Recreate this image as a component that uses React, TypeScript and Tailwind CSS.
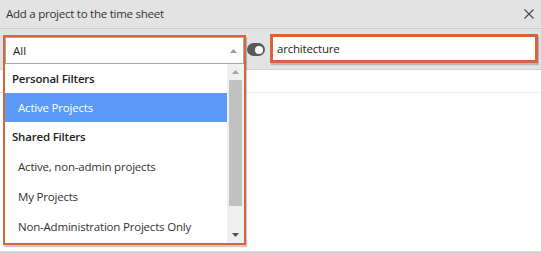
import React from "react";

export default function App() {
  const font = { fontFamily: '"Open Sans", "Noto Sans", Arial, sans-serif' };
  return (
    <div className="relative w-[541px] h-[253px] bg-white overflow-hidden" style={font}>
      {/* header */}
      <div className="h-[29px] bg-[#e3e3e3] border-b border-[#cdcdcd] flex items-center justify-between pl-[6px] pr-[6px]">
        <span className="text-[11.5px] text-[#333] tracking-[-0.25px]">Add a project to the time sheet</span>
        <svg width="10" height="10" viewBox="0 0 10 10" className="mr-[1px]">
          <path d="M0.5 0.5 L9.5 9.5 M9.5 0.5 L0.5 9.5" stroke="#3b4a5a" strokeWidth="1.1" />
        </svg>
      </div>
      {/* toolbar */}
      <div className="relative h-[41px] bg-[#e3e3e3] border-b border-[#d2d2d2] flex items-start pt-[5px] pl-[247px] pr-[3px]">
        <div className="mt-[9px] w-[18px] h-[13px] rounded-full bg-[#5a5a5a] flex items-center justify-end pr-[2px]">
          <div className="w-[8px] h-[8px] rounded-full bg-white" />
        </div>
        <div className="ml-[5px] flex-1 h-[29px] border-[3px] border-[#d9633d] bg-white shadow-[1px_2px_1px_rgba(0,0,0,0.2)] flex items-center pl-[4px]">
          <span className="text-[11.5px] text-[#222] tracking-[-0.2px]">architecture</span>
        </div>
      </div>
      {/* content line */}
      <div className="h-[23px] border-b border-[#ececec]" />
      {/* bottom strip */}
      <div className="absolute left-0 right-0 bottom-0 h-[2px] bg-[#d6d6d6]" />

      {/* dropdown */}
      <div className="absolute left-[3px] top-[35px] w-[243px] h-[210px] border-[2px] border-[#d9633d] bg-white shadow-[1px_2px_1px_rgba(0,0,0,0.2)] flex flex-col">
        <div className="h-[27px] border border-[#a8a8a8] flex items-center justify-between pl-[7px] pr-[6px]">
          <span className="text-[11.5px] text-[#222]">All</span>
          <svg width="7" height="4" viewBox="0 0 7 4"><path d="M0 4 L3.5 0 L7 4 Z" fill="#9a9a9a" /></svg>
        </div>
        <div className="flex flex-1 min-h-0">
          <div className="flex-1 flex flex-col text-[11.5px] text-[#333] tracking-[-0.2px]">
            <div className="h-[29px] shrink-0 flex items-center pl-[7px] font-semibold text-[#222]">Personal Filters</div>
            <div className="h-[29px] shrink-0 flex items-center pl-[13px] bg-[#5b9bf7] text-white">Active Projects</div>
            <div className="h-[30px] shrink-0 flex items-center pl-[7px] font-semibold text-[#222]">Shared Filters</div>
            <div className="h-[30px] shrink-0 flex items-center pl-[13px]">Active, non-admin projects</div>
            <div className="h-[30px] shrink-0 flex items-center pl-[13px]">My Projects</div>
            <div className="h-[30px] shrink-0 flex items-center pl-[13px]">Non-Administration Projects Only</div>
          </div>
          <div className="w-[17px] bg-[#f0f0f0] flex flex-col items-center">
            <div className="h-[16px] flex items-center justify-center">
              <svg width="7" height="4" viewBox="0 0 7 4"><path d="M0 4 L3.5 0 L7 4 Z" fill="#a3a3a3" /></svg>
            </div>
            <div className="w-[13px] h-[126px] bg-[#c1c1c1]" />
            <div className="flex-1" />
            <div className="h-[16px] flex items-center justify-center">
              <svg width="7" height="4" viewBox="0 0 7 4"><path d="M0 0 L3.5 4 L7 0 Z" fill="#505050" /></svg>
            </div>
          </div>
        </div>
      </div>
    </div>
  );
}
